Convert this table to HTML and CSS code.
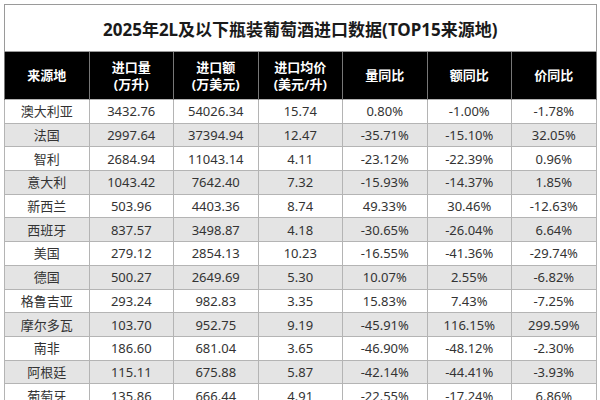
FILE: index.html
```html
<!DOCTYPE html>
<html lang="zh">
<head>
<meta charset="utf-8">
<link rel="stylesheet" href="styles.css">
</head>
<body>
<div class="sheet">
<table class="data">
<colgroup><col><col><col><col><col><col><col></colgroup>
<thead>
<tr><th colspan="7" class="title">2025年2L及以下瓶装葡萄酒进口数据(TOP15来源地)</th></tr>
<tr class="head">
<th>来源地</th><th>进口量<br>(万升)</th><th>进口额<br>(万美元)</th><th>进口均价<br>(美元/升)</th><th>量同比</th><th>额同比</th><th>价同比</th>
</tr>
</thead>
<tbody>
<tr><td>澳大利亚</td><td>3432.76</td><td>54026.34</td><td>15.74</td><td>0.80%</td><td>-1.00%</td><td>-1.78%</td></tr>
<tr><td>法国</td><td>2997.64</td><td>37394.94</td><td>12.47</td><td>-35.71%</td><td>-15.10%</td><td>32.05%</td></tr>
<tr><td>智利</td><td>2684.94</td><td>11043.14</td><td>4.11</td><td>-23.12%</td><td>-22.39%</td><td>0.96%</td></tr>
<tr><td>意大利</td><td>1043.42</td><td>7642.40</td><td>7.32</td><td>-15.93%</td><td>-14.37%</td><td>1.85%</td></tr>
<tr><td>新西兰</td><td>503.96</td><td>4403.36</td><td>8.74</td><td>49.33%</td><td>30.46%</td><td>-12.63%</td></tr>
<tr><td>西班牙</td><td>837.57</td><td>3498.87</td><td>4.18</td><td>-30.65%</td><td>-26.04%</td><td>6.64%</td></tr>
<tr><td>美国</td><td>279.12</td><td>2854.13</td><td>10.23</td><td>-16.55%</td><td>-41.36%</td><td>-29.74%</td></tr>
<tr><td>德国</td><td>500.27</td><td>2649.69</td><td>5.30</td><td>10.07%</td><td>2.55%</td><td>-6.82%</td></tr>
<tr><td>格鲁吉亚</td><td>293.24</td><td>982.83</td><td>3.35</td><td>15.83%</td><td>7.43%</td><td>-7.25%</td></tr>
<tr><td>摩尔多瓦</td><td>103.70</td><td>952.75</td><td>9.19</td><td>-45.91%</td><td>116.15%</td><td>299.59%</td></tr>
<tr><td>南非</td><td>186.60</td><td>681.04</td><td>3.65</td><td>-46.90%</td><td>-48.12%</td><td>-2.30%</td></tr>
<tr><td>阿根廷</td><td>115.11</td><td>675.88</td><td>5.87</td><td>-42.14%</td><td>-44.41%</td><td>-3.93%</td></tr>
<tr><td>葡萄牙</td><td>135.86</td><td>666.44</td><td>4.91</td><td>-22.55%</td><td>-17.24%</td><td>6.86%</td></tr>
</tbody>
</table>
</div>
</body>
</html>
```
FILE: styles.css
```css
html, body {
  margin: 0;
  padding: 0;
  background: #ffffff;
  overflow: hidden;
}
body {
  font-family: "Noto Sans", "Noto Sans CJK SC", sans-serif;
  color: #333;
}
.sheet {
  padding: 4px 4px 0 4px;
}
.data {
  width: 592px;
  border-collapse: collapse;
  table-layout: fixed;
  border: 1.5px solid #9a9a9a;
}
.data col {
  width: 84.5px;
}
.title {
  height: 46px;
  padding: 0;
  font-size: 17px;
  font-weight: 700;
  color: #1a1a1a;
  text-align: center;
  background: #fff;
  border: 1.5px solid #9a9a9a;
}
.head th {
  height: 47px;
  padding: 0;
  background: #000;
  color: #fff;
  font-size: 13px;
  font-weight: 700;
  line-height: 17px;
  border-left: 1px solid #777;
  border-right: 1px solid #777;
  text-align: center;
}
.data td {
  height: 22.7px;
  padding: 0;
  font-size: 13px;
  line-height: 16px;
  text-align: center;
  color: #333;
  border: 1px solid #b4b4b4;
}
.data tbody tr:nth-child(even) td {
  background: #e4e4e4;
}
```
